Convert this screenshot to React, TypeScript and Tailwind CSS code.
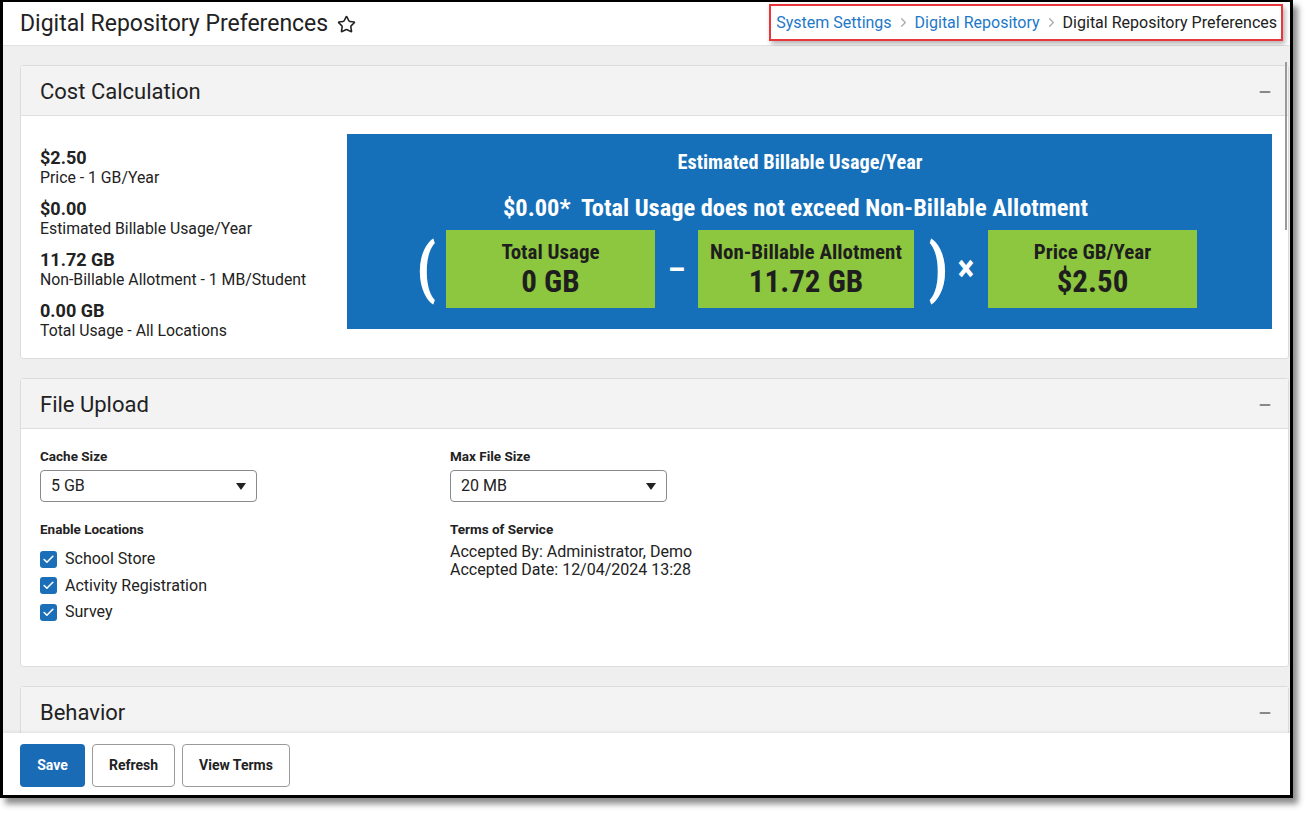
import { Star, ChevronRight, Minus, Check } from 'lucide-react';

const narrow = { fontFamily: '"Roboto Condensed", "Liberation Sans Narrow", Roboto, sans-serif' };

const Stat = ({ value, label }: { value: string; label: string }) => (
  <div>
    <div className="text-[18px] font-bold leading-[20px] text-[#222]">{value}</div>
    <div className="text-[15.8px] leading-[20px] text-[#222]">{label}</div>
  </div>
);

const GreenBox = ({ title, value, width }: { title: string; value: string; width: string }) => (
  <div className={`${width} h-[78px] bg-[#8dc63f] flex flex-col items-center justify-center text-[#1e1e1e]`}>
    <div className="text-[21px] font-bold leading-[22px]">{title}</div>
    <div className="mt-[3px] text-[31px] font-bold leading-[32px]">{value}</div>
  </div>
);

const CardHeader = ({ title }: { title: string }) => (
  <div className="h-[50px] flex items-center justify-between pl-[19px] pr-[15px] pt-[2px] bg-[#f3f3f3] border-b border-[#dedede]">
    <span className="text-[22px] text-[#222]">{title}</span>
    <Minus className="w-[16px] h-[16px] text-[#666]" strokeWidth={2.5} />
  </div>
);

const Select = ({ value }: { value: string }) => (
  <div className="mt-[6px] w-[217px] h-[32px] border border-[#8a8a8a] rounded-[4px] flex items-center justify-between pl-[10px] pr-[10px] bg-white">
    <span className="text-[16px] text-[#222]">{value}</span>
    <svg width="10" height="7" viewBox="0 0 10 7">
      <polygon points="0,0 10,0 5,7" fill="#222" />
    </svg>
  </div>
);

const CheckRow = ({ label }: { label: string }) => (
  <div className="h-[26.5px] flex items-center gap-[8px]">
    <div className="w-[17px] h-[17px] rounded-[3px] bg-[#1a6fb8] flex items-center justify-center">
      <Check className="w-[13px] h-[13px] text-white" strokeWidth={3} />
    </div>
    <span className="text-[16px] text-[#222]">{label}</span>
  </div>
);

export default function App() {
  return (
    <div className="w-[1308px] h-[814px] bg-white relative" style={{ fontFamily: 'Roboto, "Noto Sans", sans-serif' }}>
      <div className="w-[1293px] h-[798px] border-black border-l-[3px] border-t-[2px] border-r-[3px] border-b-[3px] shadow-[5px_6px_6px_rgba(0,0,0,0.45)] flex flex-col overflow-hidden bg-white">
        {/* page header */}
        <div className="h-[44px] flex items-start justify-between pl-[17px] pr-[7px] border-b border-[#e2e2e2] bg-white">
          <div className="h-[45px] flex items-center gap-[9px]">
            <h1 className="text-[23px] text-[#222]">Digital Repository Preferences</h1>
            <Star className="w-[19px] h-[19px] text-[#222]" strokeWidth={2} />
          </div>
          <div className="mt-[2px] h-[37px] flex items-center gap-[4px] pl-[5px] pr-[4px] border-2 border-[#e8363c] shadow-[2px_3px_5px_rgba(0,0,0,0.3)] text-[16px]">
            <span className="text-[#1d78c8]">System Settings</span>
            <ChevronRight className="w-[15px] h-[15px] text-[#aaa]" />
            <span className="text-[#1d78c8]">Digital Repository</span>
            <ChevronRight className="w-[15px] h-[15px] text-[#aaa]" />
            <span className="text-[#222]">Digital Repository Preferences</span>
          </div>
        </div>

        {/* content */}
        <div className="flex-1 relative overflow-hidden bg-[#efefef] pt-[19px] pl-[17px] pr-[1px] flex flex-col gap-[19px]">
          <div className="absolute right-[3px] top-[16px] w-[2px] h-[168px] bg-[#9a9a9a]" />

          <div className="bg-white border border-[#dcdcdc] rounded-[3px] shrink-0">
            <CardHeader title="Cost Calculation" />
            <div className="h-[242px] flex items-start pt-[18px] pr-[16px]">
              <div className="w-[326px] pl-[19px] pt-[14px] flex flex-col gap-[11px]">
                <Stat value="$2.50" label="Price - 1 GB/Year" />
                <Stat value="$0.00" label="Estimated Billable Usage/Year" />
                <Stat value="11.72 GB" label="Non-Billable Allotment - 1 MB/Student" />
                <Stat value="0.00 GB" label="Total Usage - All Locations" />
              </div>
              <div className="flex-1 h-[195px] bg-[#1570b9] flex flex-col items-center pt-[17px] text-white" style={narrow}>
                <div className="mr-[19px] text-[20.3px] font-bold leading-[22px]">Estimated Billable Usage/Year</div>
                <div className="mt-[21px] mr-[28px] text-[24.4px] font-bold leading-[28px] whitespace-pre">$0.00*  Total Usage does not exceed Non-Billable Allotment</div>
                <div className="mt-[8px] flex items-center pr-[6px]">
                  <span className="w-[16px] text-center text-[64px] font-semibold leading-[78px]">(</span>
                  <div className="ml-[14px]">
                    <GreenBox title="Total Usage" value="0 GB" width="w-[209px]" />
                  </div>
                  <span className="w-[43px] text-center text-[32px] font-bold leading-[30px]">–</span>
                  <GreenBox title="Non-Billable Allotment" value="11.72 GB" width="w-[216px]" />
                  <span className="ml-[14px] w-[16px] text-center text-[64px] font-semibold leading-[78px]">)</span>
                  <span className="w-[44px] text-center text-[36px] font-bold leading-[30px]">×</span>
                  <GreenBox title="Price GB/Year" value="$2.50" width="w-[209px]" />
                </div>
              </div>
            </div>
          </div>

          <div className="bg-white border border-[#dcdcdc] rounded-[3px] shrink-0">
            <CardHeader title="File Upload" />
            <div className="h-[237px] flex pl-[19px] pt-[19px]">
              <div className="w-[410px]">
                <div className="text-[13.5px] font-bold leading-[16px] text-[#222]">Cache Size</div>
                <Select value="5 GB" />
                <div className="mt-[19px] text-[13.5px] font-bold leading-[16px] text-[#222]">Enable Locations</div>
                <div className="mt-[9px]">
                  <CheckRow label="School Store" />
                  <CheckRow label="Activity Registration" />
                  <CheckRow label="Survey" />
                </div>
              </div>
              <div>
                <div className="text-[13.5px] font-bold leading-[16px] text-[#222]">Max File Size</div>
                <Select value="20 MB" />
                <div className="mt-[19px] text-[13.5px] font-bold leading-[16px] text-[#222]">Terms of Service</div>
                <div className="mt-[6px] text-[16px] leading-[18px] text-[#222]">
                  <div>Accepted By: Administrator, Demo</div>
                  <div>Accepted Date: 12/04/2024 13:28</div>
                </div>
              </div>
            </div>
          </div>

          <div className="bg-white border border-[#dcdcdc] rounded-[3px] shrink-0">
            <CardHeader title="Behavior" />
            <div className="h-[100px]" />
          </div>
        </div>

        {/* footer */}
        <div className="h-[62px] shrink-0 bg-white flex items-start gap-[7px] pt-[11px] pl-[17px] shadow-[0_-1px_3px_rgba(0,0,0,0.08)] relative">
          <button className="h-[43px] w-[65px] rounded-[4px] bg-[#1a6bb6] text-white text-[14px] font-bold">Save</button>
          <button className="h-[43px] w-[83px] rounded-[4px] border border-[#9a9a9a] text-[#222] text-[14px] font-bold">Refresh</button>
          <button className="h-[43px] w-[108px] rounded-[4px] border border-[#9a9a9a] text-[#222] text-[14px] font-bold">View Terms</button>
        </div>
      </div>
    </div>
  );
}
